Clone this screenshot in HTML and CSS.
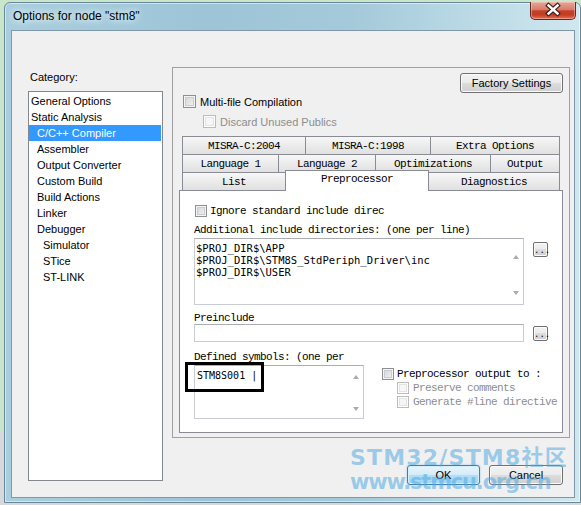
FILE: index.html
```html
<!DOCTYPE html>
<html>
<head>
	<meta charset="utf-8">
	<title>Options for node "stm8"</title>
	<link rel="stylesheet" href="styles.css">
</head>
<body>
	<div class="desk">
		<div class="window">
			<div class="titlebar">
				<span class="title">Options for node "stm8"</span>
				<div class="close">
					<svg width="46" height="18" viewBox="0 0 46 18">
						<path d="M18.5 4.5 L27.5 12.5 M27.5 4.5 L18.5 12.5" stroke="#3a1a16" stroke-width="4.6" stroke-linecap="square" fill="none"/>
						<path d="M18.5 4.5 L27.5 12.5 M27.5 4.5 L18.5 12.5" stroke="#fff" stroke-width="2.4" stroke-linecap="square" fill="none"/>
					</svg>
				</div>
			</div>

			<div class="client">
				<div class="side">
					<div class="cat_label">Category:</div>
					<ul class="catlist">
						<li>General Options</li>
						<li>Static Analysis</li>
						<li class="lvl1 selected">C/C++ Compiler</li>
						<li class="lvl1">Assembler</li>
						<li class="lvl1">Output Converter</li>
						<li class="lvl1">Custom Build</li>
						<li class="lvl1">Build Actions</li>
						<li class="lvl1">Linker</li>
						<li class="lvl1">Debugger</li>
						<li class="lvl2">Simulator</li>
						<li class="lvl2">STice</li>
						<li class="lvl2">ST-LINK</li>
					</ul>
				</div>

				<div class="main">
					<div class="panel">
						<div class="factory_row"><div class="btn factory">Factory Settings</div></div>
						<div class="chk_row multi"><span class="chk"></span>Multi-file Compilation</div>
						<div class="chk_row discard disabled"><span class="chk"></span>Discard Unused Publics</div>

						<div class="tabs">
							<div class="tab_row">
								<div class="tab" style="width:124px">MISRA-C:2004</div>
								<div class="tab" style="width:126px">MISRA-C:1998</div>
								<div class="tab" style="width:130px">Extra Options</div>
							</div>
							<div class="tab_row">
								<div class="tab" style="width:97px">Language 1</div>
								<div class="tab" style="width:98px">Language 2</div>
								<div class="tab" style="width:116px">Optimizations</div>
								<div class="tab" style="width:70px">Output</div>
							</div>
							<div class="tab_row">
								<div class="tab" style="width:104px">List</div>
								<div class="tab active" style="width:144px">Preprocessor</div>
								<div class="tab" style="width:132px">Diagnostics</div>
							</div>
						</div>

						<div class="page">
							<div class="chk_row small ignore"><span class="chk"></span>Ignore standard include direc</div>

							<div class="lbl">Additional include directories: (one per line)</div>
							<div class="field_row">
								<div class="textbox inc_box">
									<div class="lines">$PROJ_DIR$\APP
$PROJ_DIR$\STM8S_StdPeriph_Driver\inc
$PROJ_DIR$\USER</div>
									<div class="vscroll inc_scroll"><span class="arr_up"></span><span class="arr_down"></span></div>
								</div>
								<div class="btn browse">...</div>
							</div>

							<div class="lbl pre_lbl">Preinclude</div>
							<div class="field_row">
								<div class="textbox pre_box"></div>
								<div class="btn browse pre_browse">...</div>
							</div>

							<div class="lbl def_lbl">Defined symbols: (one per</div>
							<div class="def_row">
								<div class="textbox def_box">
									<div class="lines sym">STM8S001 |</div>
									<div class="vscroll def_scroll"><span class="arr_up"></span><span class="arr_down"></span></div>
								</div>
								<div class="pp_group">
									<div class="chk_row small"><span class="chk"></span>Preprocessor output to :</div>
									<div class="chk_row small sub disabled"><span class="chk"></span>Preserve comments</div>
									<div class="chk_row small sub disabled"><span class="chk"></span>Generate #line directive</div>
								</div>
							</div>

							<!-- black frame drawn round the symbol entry -->
							<div class="mark"></div>
						</div>
					</div>

					<div class="dlg_buttons">
						<div class="btn ok">OK</div>
						<div class="btn cancel">Cancel</div>
					</div>
				</div>
			</div>

			<div class="watermark">
				<div class="wm_top">STM32/STM8社区</div>
				<div class="wm_url">www.stmcu.org.cn</div>
			</div>
		</div>
	</div>
</body>
</html>
```

FILE: styles.css
```css
body {
	margin: 0;
	width: 581px;
	height: 505px;
	overflow: hidden;
	background: linear-gradient(#c9e6cb 0, #c9e6cb 432px, #d5d9dc 432px);
	font-family: "Liberation Sans", Arial, sans-serif;
	font-size: 11px;
	color: #000;
}

.desk {
	padding: 2px 0 0 4px;
}

/* aero window frame */
.window {
	position: relative;
	width: 577px;
	height: 501px;
	box-sizing: border-box;
	border: 1px solid #6a8799;
	border-radius: 6px 6px 0 0;
	padding: 0 5px 4px 6px;
	background: linear-gradient(90deg, #a9cede 0%, #9dc5d7 35%, #a4c9da 60%, #c2dfe9 88%, #d0e7ee 100%);
	box-shadow: inset 0 0 0 1px rgba(255, 255, 255, .5);
}

.titlebar {
	height: 27px;
	display: flex;
	justify-content: space-between;
	align-items: flex-start;
}

.title {
	margin: 6px 0 0 2px;
	font-size: 12px;
	line-height: 14px;
	text-shadow: 0 0 6px #eef7fb, 0 0 10px #eef7fb;
}

.close {
	width: 46px;
	height: 18px;
	margin: -1px -1px 0 0;
	box-sizing: border-box;
	border: 1px solid #5d2920;
	border-top: none;
	border-radius: 0 0 5px 5px;
	background: linear-gradient(#e8a597 0%, #d87b69 45%, #c2412a 52%, #c23c22 75%, #e07358 100%);
	box-shadow: inset 0 0 0 1px rgba(255, 210, 200, .45);
}

.close svg {
	display: block;
	margin: -1px 0 0 -1px;
}

.client {
	height: 468px;
	box-sizing: border-box;
	border: 1px solid #7f97a8;
	background: #f0f0f0;
	display: flex;
	padding: 36px 0 0 16px;
}

/* category list on the left */
.side {
	width: 135px;
	padding-top: 3px;
}

.cat_label {
	height: 14px;
	line-height: 14px;
	margin: 0 0 7px 2px;
}

.catlist {
	list-style: none;
	margin: 0;
	padding: 1px 0 0;
	height: 390px;
	box-sizing: border-box;
	border: 1px solid #828790;
	background: #fff;
}

.catlist li {
	height: 16px;
	line-height: 16px;
	padding-left: 2px;
	white-space: nowrap;
}

.catlist .lvl1 {
	padding-left: 8px;
}

.catlist .lvl2 {
	padding-left: 14px;
}

.catlist .selected {
	background: #3399ff;
	color: #fff;
	margin-right: 1px;
}

.main {
	margin-left: 9px;
	width: 398px;
}

.panel {
	height: 371px;
	box-sizing: border-box;
	border: 1px solid #a0a0a0;
	padding: 5px 6px 0 6px;
}

/* buttons */
.btn {
	height: 20px;
	box-sizing: border-box;
	border: 1px solid #707070;
	border-radius: 3px;
	background: linear-gradient(#f2f2f2 0%, #ebebeb 49%, #dddddd 50%, #cfcfcf 100%);
	box-shadow: inset 0 0 0 1px #fbfbfb;
	text-align: center;
	line-height: 18px;
	white-space: nowrap;
}

.factory_row {
	display: flex;
	justify-content: flex-end;
}

.factory {
	width: 103px;
}

/* checkboxes */
.chk_row {
	display: flex;
	align-items: center;
	height: 13px;
	white-space: nowrap;
}

.chk {
	flex: none;
	width: 13px;
	height: 13px;
	box-sizing: border-box;
	border: 1px solid #8e8f8f;
	margin-right: 4px;
	background: linear-gradient(135deg, #cfd2d6, #f5f5f5);
	box-shadow: inset 0 0 0 1px #f4f4f4, inset 0 0 0 2px #c9ccd0;
}

.disabled {
	color: #8d8d8d;
}

.disabled .chk {
	border-color: #bcbcbc;
	background: #f6f6f6;
	box-shadow: inset 0 0 0 1px #fff, inset 0 0 0 2px #e4e4e4;
}

.multi {
	margin: 2px 0 0 4px;
}

.discard {
	margin: 7px 0 0 24px;
}

/* tab strip, three rows */
.tabs {
	margin: 8px 0 0 3px;
	width: 378px;
	font-family: "Liberation Mono", monospace;
	font-size: 11px;
	letter-spacing: -0.6px;
}

.tab_row {
	display: flex;
	height: 18px;
}

.tab {
	flex: none;
	height: 18px;
	box-sizing: border-box;
	border: 1px solid #898c95;
	border-bottom: none;
	margin-right: -1px;
	background: linear-gradient(#f7f7f7, #e0e0e0);
	text-align: center;
	line-height: 18px;
	white-space: nowrap;
}

.tab.active {
	position: relative;
	z-index: 1;
	height: 21px;
	margin-top: -2px;
	background: #fff;
	line-height: 17px;
}

.page {
	position: relative;
	width: 384px;
	height: 243px;
	box-sizing: border-box;
	border: 1px solid #898c95;
	background: #fff;
	padding-left: 14px;
	overflow: hidden;
	font-family: "Liberation Mono", monospace;
	font-size: 11px;
	letter-spacing: -0.6px;
}

.chk_row.small {
	height: 12px;
}

.small .chk {
	width: 12px;
	height: 12px;
	margin-right: 3px;
}

.ignore {
	margin: 14px 0 0 1px;
}

.lbl {
	margin-top: 7px;
	height: 12px;
	line-height: 12px;
	white-space: nowrap;
}

.pre_lbl {
	margin-top: 7px;
}

.def_lbl {
	margin-top: 9px;
}

.field_row {
	display: flex;
	align-items: flex-start;
	margin-top: 2px;
}

.pre_lbl + .field_row {
	margin-top: 0;
}

.textbox {
	display: flex;
	box-sizing: border-box;
	border: 1px solid #c9ccd2;
	border-top-color: #abadb3;
	background: #fff;
}

.inc_box {
	width: 330px;
	height: 67px;
}

.pre_box {
	width: 330px;
	height: 18px;
}

.def_box {
	width: 170px;
	height: 54px;
}

.lines {
	flex: 1;
	padding: 3px 1px;
	font-family: "DejaVu Sans Mono", monospace;
	font-size: 10.5px;
	line-height: 12px;
	letter-spacing: 0;
	white-space: pre;
	overflow: hidden;
}

.lines.sym {
	padding: 4px 2px;
	font-size: 10px;
}

.vscroll {
	width: 14px;
	display: flex;
	flex-direction: column;
	justify-content: space-between;
	align-items: center;
}

.inc_scroll {
	padding: 16px 0 9px;
}

.def_scroll {
	padding: 9px 0 7px;
}

.arr_up {
	width: 0;
	height: 0;
	border-left: 3px solid transparent;
	border-right: 3px solid transparent;
	border-bottom: 4px solid #aaa;
}

.arr_down {
	width: 0;
	height: 0;
	border-left: 3px solid transparent;
	border-right: 3px solid transparent;
	border-top: 4px solid #aaa;
}

.browse {
	width: 15px;
	height: 15px;
	margin: 4px 0 0 9px;
	border-radius: 2px;
	font-size: 9px;
	line-height: 17px;
	letter-spacing: 0;
}

.pre_browse {
	margin-top: 2px;
}

.def_row {
	display: flex;
	align-items: flex-start;
	margin-top: 2px;
}

.pp_group {
	margin: 3px 0 0 18px;
}

.pp_group .sub {
	margin: 2px 0 0 15px;
}

.sub .chk {
	margin-right: 4px;
}

.mark {
	position: absolute;
	left: 5px;
	top: 171px;
	width: 79px;
	height: 30px;
	box-sizing: border-box;
	border: 3px solid #000;
}

.dlg_buttons {
	display: flex;
	justify-content: flex-end;
	gap: 9px;
	margin-top: 27px;
	padding-right: 7px;
}

.ok {
	width: 73px;
	border-color: #3c7fb1;
	background: linear-gradient(#e8f5fc 0%, #d3ecf9 49%, #b3def5 50%, #a4d5f1 100%);
	box-shadow: inset 0 0 0 1px #d8eefb, 0 0 2px #7fc6ef;
}

.cancel {
	width: 74px;
}

/* site stamp over the lower right corner */
.watermark {
	position: absolute;
	left: 345px;
	top: 443px;
	color: rgba(80, 170, 225, .55);
	font-family: "DejaVu Sans", "Noto Sans CJK SC", sans-serif;
	font-weight: bold;
	white-space: nowrap;
	pointer-events: none;
}

.wm_top {
	font-size: 22px;
	line-height: 23px;
	letter-spacing: 1.2px;
}

.wm_url {
	margin-top: 2px;
	font-size: 21px;
	line-height: 22px;
	letter-spacing: -1.2px;
}
```
